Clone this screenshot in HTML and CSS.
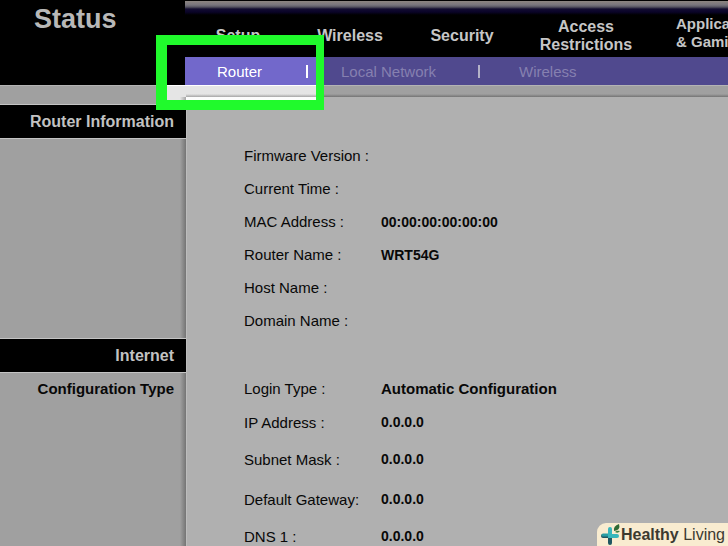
FILE: index.html
```html
<!DOCTYPE html>
<html lang="en">
<head>
<meta charset="utf-8">
<title>Status - Router</title>
<link rel="stylesheet" href="styles.css">
</head>
<body>
<header class="masthead">
  <h1 class="page-title">Status</h1>
  <div class="menus">
    <div class="ridge"></div>
    <nav class="main-nav" aria-label="Main">
      <a href="#">Setup</a>
      <a href="#">Wireless</a>
      <a href="#">Security</a>
      <a href="#">Access<br>Restrictions</a>
      <a href="#" class="last">Applications<br>&amp; Gaming</a>
    </nav>
    <nav class="sub-nav" aria-label="Status pages">
      <a href="#" class="current">Router</a>
      <span class="bar"></span>
      <a href="#">Local Network</a>
      <span class="bar"></span>
      <a href="#">Wireless</a>
    </nav>
  </div>
</header>
<main class="content">
  <div class="side top-side"></div>
  <div class="top-strip"></div>

  <div class="side first">
    <h2>Router Information</h2>
  </div>
  <div class="panel panel-first">
    <table>
      <tr><th scope="row">Firmware Version :</th><td></td></tr>
      <tr><th scope="row">Current Time :</th><td></td></tr>
      <tr><th scope="row">MAC Address :</th><td>00:00:00:00:00:00</td></tr>
      <tr><th scope="row">Router Name :</th><td>WRT54G</td></tr>
      <tr><th scope="row">Host Name :</th><td></td></tr>
      <tr><th scope="row">Domain Name :</th><td></td></tr>
    </table>
  </div>

  <div class="side">
    <h2>Internet</h2>
    <h3>Configuration Type</h3>
  </div>
  <div class="panel panel-second">
    <table>
      <tr><th scope="row">Login Type :</th><td class="mode">Automatic Configuration</td></tr>
      <tr><th scope="row">IP Address :</th><td>0.0.0.0</td></tr>
      <tr class="tall"><th scope="row">Subnet Mask :</th><td>0.0.0.0</td></tr>
      <tr class="tall"><th scope="row">Default Gateway:</th><td>0.0.0.0</td></tr>
      <tr><th scope="row">DNS 1 :</th><td>0.0.0.0</td></tr>
    </table>
  </div>
</main>
<div class="highlight"></div>
<div class="brand">
  <svg width="20" height="22" viewBox="0 0 20 22" aria-hidden="true">
    <path d="M2 12h7v7" fill="none" stroke="#205762" stroke-width="4" stroke-linecap="round"/>
    <path d="M2 11h7" stroke="#2a9da3" stroke-width="3" stroke-linecap="round"/>
    <path d="M9 5v7h7" fill="none" stroke="#38b6bb" stroke-width="4" stroke-linecap="round"/>
    <path d="M13 7q-1-5 5-7 2 6-5 7z" fill="#2f6b35"/>
    <path d="M14 8q2-2 5-1-2 3-5 1z" fill="#3f7d3d"/>
  </svg>
  <span><b>Healthy</b> Living</span>
</div>
</body>
</html>
```
FILE: styles.css
```css
* { box-sizing: border-box; }

html, body { margin: 0; height: 100%; overflow: hidden; }

body {
  display: flex;
  flex-direction: column;
  background: #a0a0a0;
  color: #080808;
  font-family: "Liberation Sans", Arial, sans-serif;
  font-size: 15px;
}

a { color: inherit; text-decoration: none; }

.masthead {
  display: grid;
  grid-template-columns: 185px 1fr;
  flex: none;
  background: #000;
}

.page-title {
  margin: 0;
  padding: 3px 0 0 34px;
  color: #b8b8b8;
  font-size: 27px;
  line-height: 32px;
}

.menus { min-width: 0; overflow: hidden; }

.ridge {
  height: 15px;
  background: linear-gradient(#000 0 1px, #8c8580 1px, #77747c 5px, #55535f 7px, #120c30 9px, #0a0428 12px, #000 15px);
}

.main-nav {
  display: grid;
  grid-template-columns: 106px 118px 106px 142px 1fr;
  align-items: center;
  height: 42px;
  color: #c6c6c6;
  font-size: 16px;
  font-weight: bold;
  line-height: 18px;
  text-align: center;
}

.main-nav .last {
  padding: 0 0 6px 19px;
  font-size: 15px;
  text-align: left;
}

.sub-nav {
  display: grid;
  grid-template-columns: 89px 35px 137px 41px 1fr;
  align-items: center;
  height: 28px;
  padding-left: 32px;
  background: #50498e;
  color: #8680b0;
}

.sub-nav .current { color: #b8b8b8; }

.bar {
  width: 2px;
  height: 13px;
  background: #b4b2c8;
}

.content {
  display: grid;
  grid-template-columns: 186px 1fr;
  grid-template-rows: 12px auto 1fr;
  flex: 1 0 auto;
}

.side {
  background: #a0a0a0 linear-gradient(to left, #747474, #a0a0a0 6px);
  text-align: right;
}

.top-side, .top-strip { border-top: 1px solid #b4b4b4; }

.top-side { background: #a0a0a0; }

.top-strip { background: linear-gradient(#a0a0a0 8px, #747474 11px); }

.first { padding-top: 7px; }

.side h2 {
  margin: 0;
  padding: 0 12px;
  border: solid #c4c4c4;
  border-width: 1px 0;
  background: #000;
  color: #c2c2c2;
  font-size: 16px;
  line-height: 33px;
}

.side h3 {
  margin: 0;
  padding: 0 12px;
  font-size: 15px;
  line-height: 32px;
}

.panel {
  padding-left: 57px;
  border-left: 1px solid #bcbcbc;
  background: #b0b0b0;
}

.panel-first { padding: 42px 0 1px 57px; }

.panel-second { padding-top: 33px; }

table { border-collapse: collapse; }

tr { height: 33px; }

.panel-second tr { height: 34px; }

.panel-second .tall { height: 40px; }

th, td { padding: 0; text-align: left; }

th { width: 137px; font-weight: normal; }

td { font-size: 14px; font-weight: bold; }

.mode { font-size: 15px; }

/* Callout frame laid over the page, lighting up what it surrounds */
.highlight {
  position: absolute;
  top: 35px;
  left: 156px;
  width: 168px;
  height: 75px;
  border: 10px solid #20fa2c;
  border-right-width: 8px;
  border-left-width: 11px;
  backdrop-filter: brightness(1.43);
}

.brand {
  position: absolute;
  right: 0;
  bottom: 0;
  display: flex;
  align-items: center;
  height: 23px;
  padding: 0 3px 0 4px;
  border-top-left-radius: 9px;
  background: #f9ecd0;
  color: #3c3a30;
  font-size: 16px;
  line-height: 22px;
}
```
